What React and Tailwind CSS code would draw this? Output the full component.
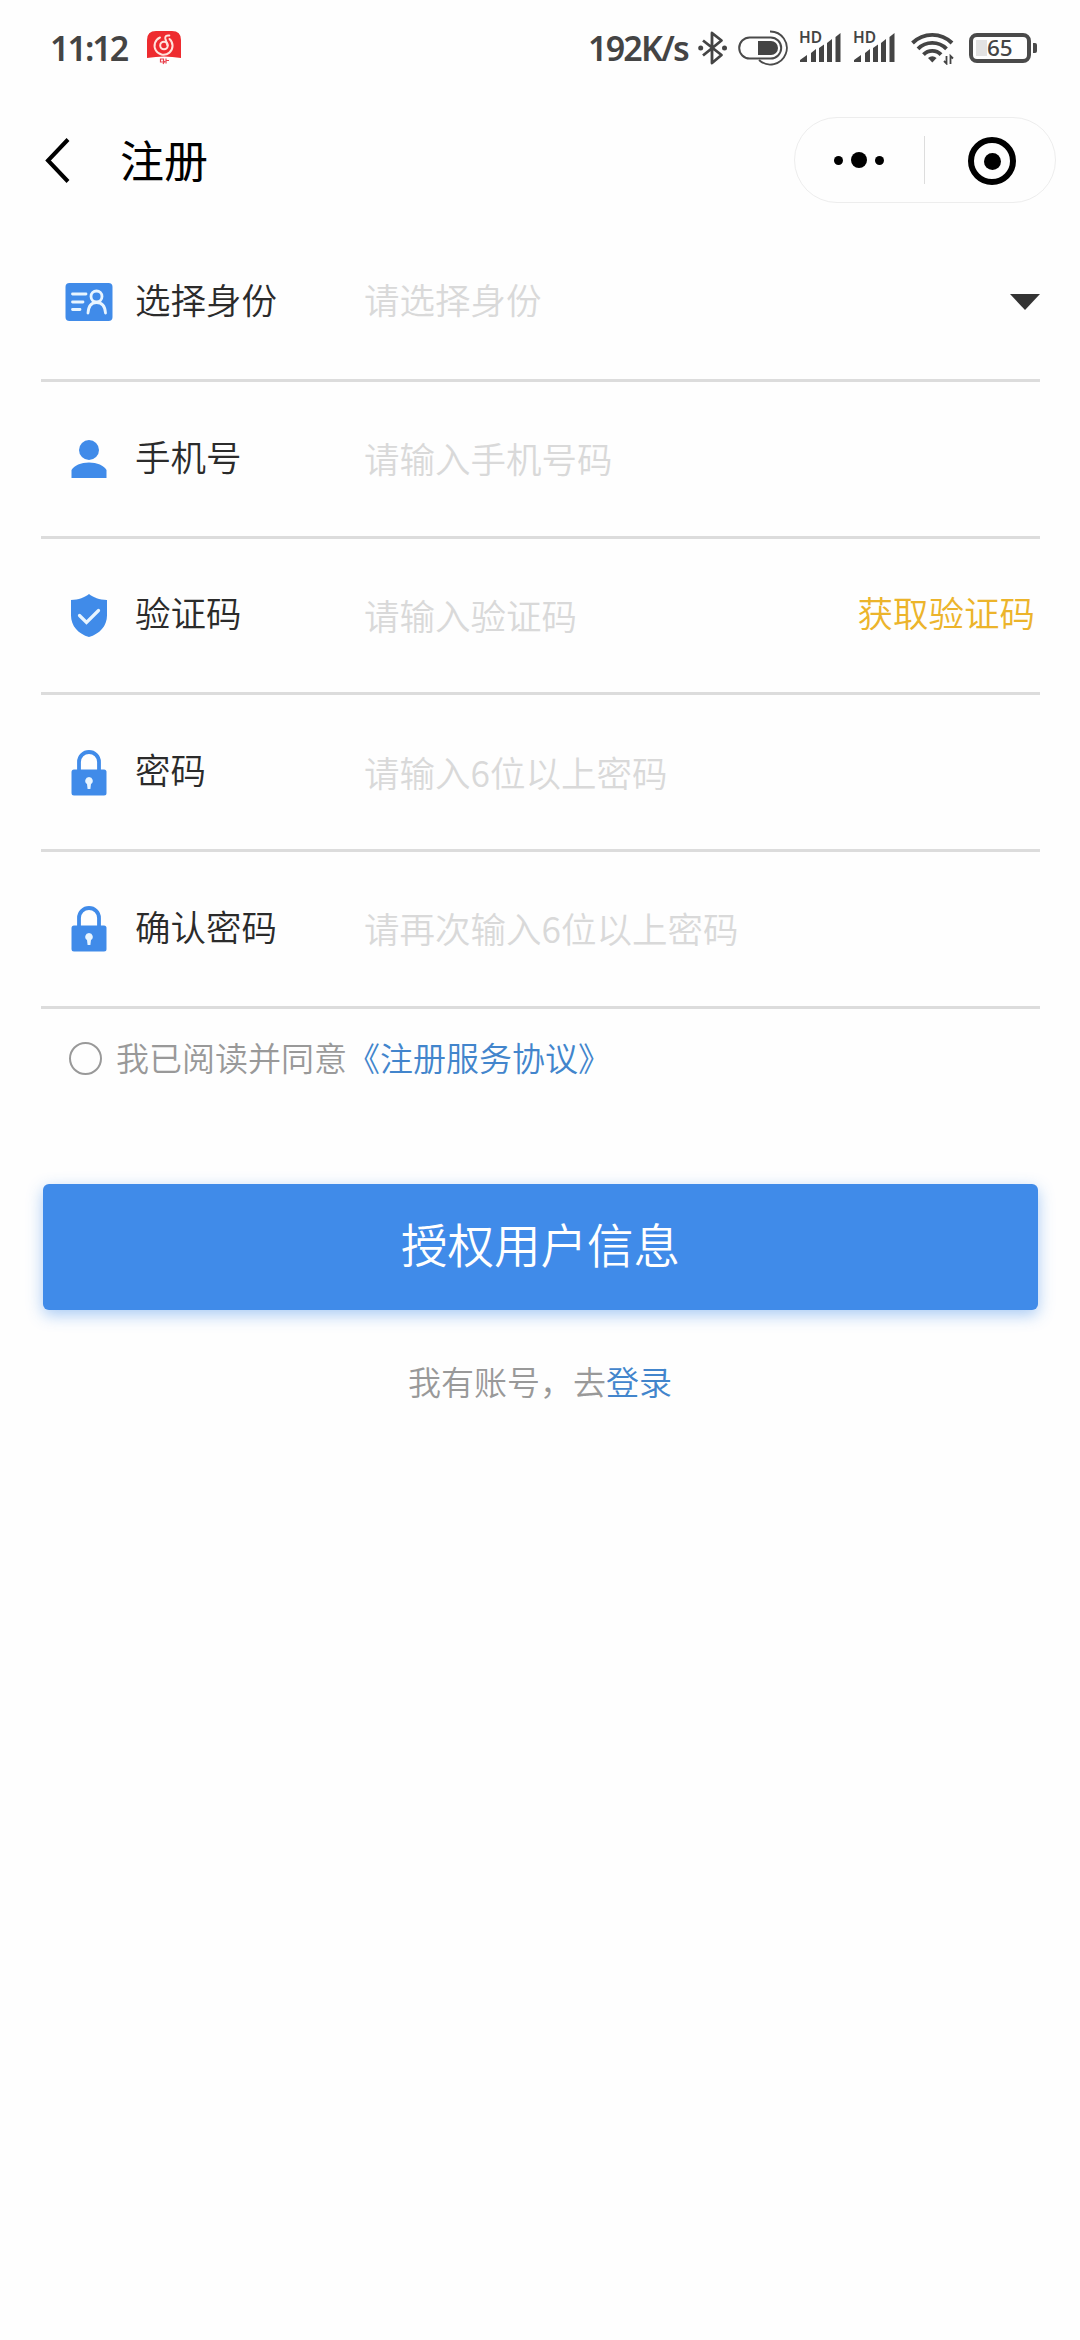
import React from 'react';

const IdCardIcon = () => (
  <svg width="48" height="40" viewBox="0 0 48 40" fill="none">
    <rect x="0.5" y="1" width="47" height="38" rx="4" fill="#408be9" />
    <g stroke="#e8f5ff" strokeWidth="2.8" strokeLinecap="round">
      <path d="M7.5 12H21M7.5 20H18M7.5 27.5H15" />
      <circle cx="31.5" cy="14.5" r="5.5" />
      <path d="M23 31c.5-7 3.5-10.5 8.5-10.5s8.500 3.500 9 10.500" />
    </g>
  </svg>
);

const UserIcon = () => (
  <svg width="36" height="40" viewBox="0 0 36 40" fill="#408be9">
    <circle cx="18" cy="11" r="10" />
    <path d="M.5 39v-8C3 26.5 10 23.5 18 23.5S33 26.5 35.5 31v8z" />
  </svg>
);

const ShieldIcon = () => (
  <svg width="38" height="44" viewBox="0 0 38 44" fill="none">
    <path d="M19 0c4 3.5 10.5 5.7 18 6v15.5C37 32 29.5 40 19 43 8.5 40 1 32 1 21.5V6C8.5 5.7 15 3.5 19 0z" fill="#408be9" />
    <path d="M9.5 21.5l7 7 12-12" stroke="#e8f5ff" strokeWidth="3.2" strokeLinecap="round" />
  </svg>
);

const LockIcon = () => (
  <svg width="36" height="46" viewBox="0 0 36 46" fill="none">
    <path d="M8 21V12a10 10 0 0 1 20 0v9" stroke="#408be9" strokeWidth="3.8" />
    <rect x="0.5" y="19.5" width="35" height="26" rx="2.5" fill="#408be9" />
    <path d="M18 27a3.8 3.8 0 0 1 2 7l-.6 5h-2.800l-.6-5a3.800 3.800 0 0 1 2-7z" fill="#e8f5ff" />
  </svg>
);

const MusicIcon = () => (
  <svg width="34" height="34" viewBox="0 0 34 34" fill="none">
    <path d="M0 27V9Q0 0 9 0h16q9 0 9 9v18q-9-1.500-17-1.500T0 27z" fill="#ee2b2f" />
    <g stroke="#ffe3dc" strokeWidth="2" strokeLinecap="round">
      <path d="M13 6.500a9 9 0 1 0 9.500 1.500" />
      <circle cx="17" cy="14.5" r="3.8" />
      <path d="M20.500 14.500L18.300 7.500q-.5-3.500 4-3" />
    </g>
    <path d="M13.5 28h3v3h-3zM19 27.5v5M16 33l2-3M19 29.5h3" stroke="#e8404c" strokeWidth="1.2" />
  </svg>
);

const BluetoothIcon = () => (
  <svg width="30" height="34" viewBox="0 0 30 34" fill="none">
    <path d="M5 9.5L23.5 24 14 32V2l9.500 7.500L5 24.500" stroke="#444" strokeWidth="2.8" strokeLinejoin="round" />
    <circle cx="2.7" cy="17" r="2.5" fill="#444" />
    <circle cx="26.5" cy="17" r="2.5" fill="#444" />
  </svg>
);

const ToggleIcon = () => (
  <svg width="50" height="36" viewBox="0 0 50 36" fill="none" stroke="#4a4a4a">
    <rect x="1.2" y="7.5" width="42" height="21" rx="10.5" strokeWidth="2" />
    <path d="M20 11h13a7 7 0 0 1 0 14H20z" fill="#444" stroke="none" />
    <path d="M32 1.500a16.500 16.500 0 1 1-11 28.500" strokeWidth="1.8" />
  </svg>
);

const SignalIcon = () => (
  <div className="relative h-[34px] w-[43px]">
    <span className="absolute left-0 -top-[1px] text-[15.5px] leading-[15px] font-semibold">HD</span>
    <svg className="absolute inset-0" width="43" height="34" viewBox="0 0 43 34" fill="#444">
      <path d="M1 31v-2l7-5v7zM12 22l5-4v13h-5zM20 17l5-3.500V31h-5zM28 12l5-4v23h-5zM36.500 6l5-4v29h-5z" />
    </svg>
  </div>
);

const WifiIcon = () => (
  <svg width="44" height="34" viewBox="0 0 44 34" fill="none" stroke="#444" strokeWidth="3.9">
    <path d="M1.500 12a28 28 0 0 1 39.500 0M7 17.800a20 20 0 0 1 28.500 0M12.500 23.700a12 12 0 0 1 17.500 0" />
    <path d="M21.300 31.500l-4.300-4.500q4.300-3.500 8.600 0z" fill="#444" stroke="none" />
    <path d="M35.500 25v7.500l-2.500-2.500M39.500 33v-8l2.500 2.500" strokeWidth="1.8" />
  </svg>
);

const fields = [
  { icon: IdCardIcon, label: '选择身份', placeholder: '请选择身份', select: true },
  { icon: UserIcon, label: '手机号', placeholder: '请输入手机号码' },
  { icon: ShieldIcon, label: '验证码', placeholder: '请输入验证码', action: '获取验证码' },
  { icon: LockIcon, label: '密码', placeholder: '请输入6位以上密码' },
  { icon: LockIcon, label: '确认密码', placeholder: '请再次输入6位以上密码' },
];

const StatusBar = () => (
  <div className="flex h-[98px] items-start pt-[31px] pl-[50px] pr-[43px] font-['Noto_Sans'] text-[#444]">
    <span className="w-[97px] text-[34px] leading-[35px] font-semibold tracking-[-2px]">11:12</span>
    <MusicIcon />
    <div className="ml-auto flex items-start">
      <span className="mr-[3px] w-[107px] whitespace-nowrap text-[34px] leading-[35px] font-semibold tracking-[-1.8px]">192K/s</span>
      <BluetoothIcon />
      <div className="ml-[10px] -mt-[1px]"><ToggleIcon /></div>
      <div className="ml-[11px]"><SignalIcon /></div>
      <div className="ml-[11px]"><SignalIcon /></div>
      <div className="ml-[15px]"><WifiIcon /></div>
      <div className="ml-[14px] mt-[2px] flex items-center">
        <div className="flex h-[30px] w-[62px] items-center rounded-[8px] border-4 border-[#4a4a4a] p-[3px]">
          <div className="h-full w-[11px] bg-[#e2e2e2]" />
          <span className="text-[22.5px] leading-none font-medium">65</span>
        </div>
        <div className="ml-[2px] h-[10px] w-[4px] rounded-r-[2px] bg-[#4a4a4a]" />
      </div>
    </div>
  </div>
);

const Header = () => (
  <div className="flex h-[127px] items-start pt-[19px] pl-[45px] pr-[24px]">
    <svg className="mt-[20px]" width="26" height="48" viewBox="0 0 26 48" fill="none">
      <path d="M23 2.5L3 23.5l20 21" stroke="#000" strokeWidth="4" />
    </svg>
    <h1 className="ml-[49px] mt-[10px] text-[44px] leading-[64px] font-normal text-black">注册</h1>
    <div className="ml-auto flex h-[86px] w-[262px] items-center rounded-full border border-[#ededed]">
      <div className="flex w-[129px] items-center justify-center gap-[8px] pr-[1px]">
        <span className="h-[9px] w-[9px] rounded-full bg-black" />
        <span className="h-[16px] w-[16px] rounded-full bg-black" />
        <span className="h-[9px] w-[9px] rounded-full bg-black" />
      </div>
      <div className="h-[48px] w-px bg-[#ddd]" />
      <div className="ml-[43px] mt-[2px] flex h-[48px] w-[48px] items-center justify-center rounded-full border-[6px] border-black">
        <span className="h-[17px] w-[17px] rounded-full bg-black" />
      </div>
    </div>
  </div>
);

const FieldRow = ({ icon: Icon, label, placeholder, select, action }) => (
  <div className="flex h-[156.75px] items-center border-b-[3px] border-[#dcdcdc] text-[35.5px] leading-[50px]">
    <div className="flex w-[94px] justify-center pt-[1px] pl-[1px]">
      <Icon />
    </div>
    <span className="w-[229px] pb-[6px] text-[#2b2b2b]">{label}</span>
    <span className={select ? 'flex-1 pb-[6px] text-[#d9d9d9]' : 'flex-1 pb-[1px] text-[#d9d9d9]'}>{placeholder}</span>
    {select && (
      <svg width="30" height="16" viewBox="0 0 30 16">
        <path d="M0 0h30L15 16z" fill="#333" />
      </svg>
    )}
    {action && <span className="pr-[5px] pb-[7px] text-[#ecb42b]">{action}</span>}
  </div>
);

export default function App() {
  return (
    <div className="h-[2340px] w-[1080px] overflow-hidden bg-[#fefefe] font-['Noto_Sans_CJK_SC',sans-serif] font-[350]">
      <StatusBar />
      <Header />

      <div className="ml-[41px] mr-[40px]">
        {fields.map((field) => (
          <FieldRow key={field.label} {...field} />
        ))}
      </div>

      <div className="mt-[23px] flex h-[50px] items-center pl-[69px] text-[33px] leading-[50px]">
        <span className="mt-[4px] h-[33px] w-[33px] rounded-full border-2 border-[#999]" />
        <span className="ml-[14px] text-[#999]">我已阅读并同意</span>
        <a className="text-[#4285cc]">《注册服务协议》</a>
      </div>

      <button className="mt-[102px] ml-[43px] block h-[126px] w-[995px] rounded-[6px] bg-[#408be9] pb-[8px] text-[46.5px] text-white shadow-[0_5px_16px_rgba(64,139,233,0.45)]">
        授权用户信息
      </button>

      <p className="mt-[46px] text-center text-[33px] leading-[50px] text-[#999]">
        我有账号，去<a className="text-[#4285cc]">登录</a>
      </p>
    </div>
  );
}
